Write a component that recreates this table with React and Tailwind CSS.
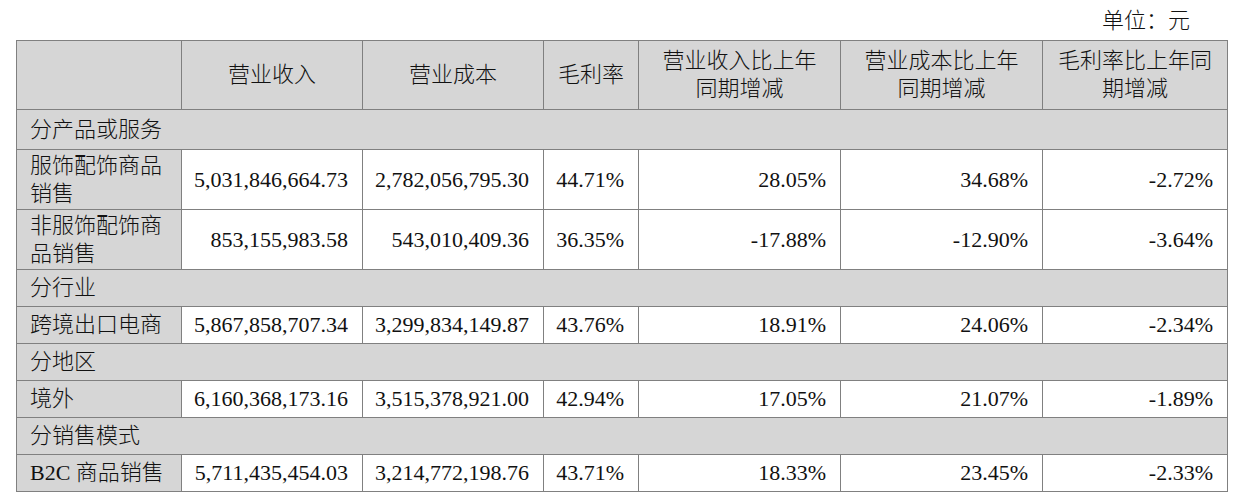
import React from 'react'

const font = { fontFamily: '"Liberation Serif", "Noto Sans CJK SC", serif' }

const groups = [
  {
    title: '分产品或服务',
    first: true,
    rows: [
      { name: '服饰配饰商品销售', tall: true, v: ['5,031,846,664.73', '2,782,056,795.30', '44.71%', '28.05%', '34.68%', '-2.72%'] },
      { name: '非服饰配饰商品销售', tall: true, v: ['853,155,983.58', '543,010,409.36', '36.35%', '-17.88%', '-12.90%', '-3.64%'] },
    ],
  },
  {
    title: '分行业',
    rows: [{ name: '跨境出口电商', v: ['5,867,858,707.34', '3,299,834,149.87', '43.76%', '18.91%', '24.06%', '-2.34%'] }],
  },
  {
    title: '分地区',
    rows: [{ name: '境外', v: ['6,160,368,173.16', '3,515,378,921.00', '42.94%', '17.05%', '21.07%', '-1.89%'] }],
  },
  {
    title: '分销售模式',
    rows: [{ name: 'B2C 商品销售', v: ['5,711,435,454.03', '3,214,772,198.76', '43.71%', '18.33%', '23.45%', '-2.33%'] }],
  },
]

const cell = 'border border-[#808080] align-middle'

export default function App(){
  return (
    <div className="w-[1242px] h-[496px] bg-white text-[#111] text-[22px] leading-[28px] font-light" style={font}>
      <div className="h-[40px] flex items-center justify-end pr-[52px] pt-[2px]">单位：元</div>
      <table className="ml-[16px] w-[1211px] table-fixed border-collapse">
        <colgroup>
          <col className="w-[165px]" />
          <col className="w-[181px]" />
          <col className="w-[181px]" />
          <col className="w-[95px]" />
          <col className="w-[202px]" />
          <col className="w-[202px]" />
          <col className="w-[185px]" />
        </colgroup>
        <thead>
          <tr className="h-[69px] bg-[#d6d6d6] text-center">
            <th className={cell + ' font-light'}></th>
            <th className={cell + ' font-light'}>营业收入</th>
            <th className={cell + ' font-light'}>营业成本</th>
            <th className={cell + ' font-light'}>毛利率</th>
            <th className={cell + ' font-light'}>营业收入比上年<br />同期增减</th>
            <th className={cell + ' font-light'}>营业成本比上年<br />同期增减</th>
            <th className={cell + ' font-light'}>毛利率比上年同<br />期增减</th>
          </tr>
        </thead>
        <tbody>
          {groups.map(g => (
            <React.Fragment key={g.title}>
              <tr className={g.first ? 'h-[40px]' : 'h-[37px]'}>
                <td colSpan={7} className={cell + ' bg-[#d6d6d6] pl-[13px]'}>{g.title}</td>
              </tr>
              {g.rows.map(r => (
                <tr key={r.name} className={r.tall ? 'h-[60px]' : 'h-[37px]'}>
                  <td className={cell + ' bg-[#d6d6d6] pl-[13px] pr-[4px]'}>{r.name}</td>
                  {r.v.map((x, i) => (
                    <td key={i} className={cell + ' bg-white text-right pr-[14px] whitespace-nowrap'}>{x}</td>
                  ))}
                </tr>
              ))}
            </React.Fragment>
          ))}
        </tbody>
      </table>
    </div>
  )
}
